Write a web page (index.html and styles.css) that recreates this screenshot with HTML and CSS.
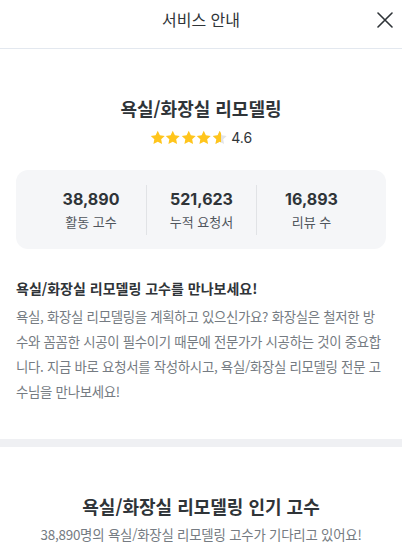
FILE: index.html
```html
<!DOCTYPE html>
<html lang="ko">
<head>
    <meta charset="UTF-8">
    <meta name="viewport" content="width=device-width, initial-scale=1.0">
    <title>서비스 안내</title>
    <link rel="stylesheet" href="styles.css">
</head>
<body>
    <header class="top-bar">
        <h1>서비스 안내</h1>
        <button class="close-btn" aria-label="닫기">
            <svg width="16" height="16" viewBox="0 0 16 16">
                <path d="M1 1 L15 15 M15 1 L1 15" stroke="#2f3438" stroke-width="1.6" stroke-linecap="round" fill="none"/>
            </svg>
        </button>
    </header>

    <section class="intro">
        <h2 class="service-title">욕실/화장실 리모델링</h2>
        <div class="rating">
            <div class="stars">
                <svg viewBox="0 0 24 24"><path class="star-on" d="M12 1.2l3.3 6.9 7.5 1-5.5 5.2 1.4 7.5L12 18.2l-6.7 3.6 1.4-7.5L1.2 9.1l7.5-1z"/></svg>
                <svg viewBox="0 0 24 24"><path class="star-on" d="M12 1.2l3.3 6.9 7.5 1-5.5 5.2 1.4 7.5L12 18.2l-6.7 3.6 1.4-7.5L1.2 9.1l7.5-1z"/></svg>
                <svg viewBox="0 0 24 24"><path class="star-on" d="M12 1.2l3.3 6.9 7.5 1-5.5 5.2 1.4 7.5L12 18.2l-6.7 3.6 1.4-7.5L1.2 9.1l7.5-1z"/></svg>
                <svg viewBox="0 0 24 24"><path class="star-on" d="M12 1.2l3.3 6.9 7.5 1-5.5 5.2 1.4 7.5L12 18.2l-6.7 3.6 1.4-7.5L1.2 9.1l7.5-1z"/></svg>
                <svg viewBox="0 0 24 24">
                    <defs>
                        <clipPath id="half"><rect x="0" y="0" width="14" height="24"/></clipPath>
                    </defs>
                    <path class="star-off" d="M12 1.2l3.3 6.9 7.5 1-5.5 5.2 1.4 7.5L12 18.2l-6.7 3.6 1.4-7.5L1.2 9.1l7.5-1z"/>
                    <path class="star-on" clip-path="url(#half)" d="M12 1.2l3.3 6.9 7.5 1-5.5 5.2 1.4 7.5L12 18.2l-6.7 3.6 1.4-7.5L1.2 9.1l7.5-1z"/>
                </svg>
            </div>
            <span class="score">4.6</span>
        </div>

        <div class="stats">
            <div class="stat">
                <strong>38,890</strong>
                <span>활동 고수</span>
            </div>
            <div class="stat">
                <strong>521,623</strong>
                <span>누적 요청서</span>
            </div>
            <div class="stat">
                <strong>16,893</strong>
                <span>리뷰 수</span>
            </div>
        </div>
    </section>

    <section class="about">
        <h3>욕실/화장실 리모델링 고수를 만나보세요!</h3>
        <p>욕실, 화장실 리모델링을 계획하고 있으신가요? 화장실은 철저한 방수와 꼼꼼한 시공이 필수이기 때문에 전문가가 시공하는 것이 중요합니다. 지금 바로 요청서를 작성하시고, 욕실/화장실 리모델링 전문 고수님을 만나보세요!</p>
    </section>

    <div class="divider"></div>

    <section class="popular">
        <h2>욕실/화장실 리모델링 인기 고수</h2>
        <p>38,890명의 욕실/화장실 리모델링 고수가 기다리고 있어요!</p>
    </section>
</body>
</html>
```

FILE: styles.css
```css
:root {
    --text-dark: #2f3438;
    --text-gray: #757b82;
    --line: #e3e8ef;
    --card-bg: #f5f6f8;
    --band: #eff0f3;
    --star: #ffc51c;
    --star-off: #e3e4e6;
}

* {
    margin: 0;
    padding: 0;
    box-sizing: border-box;
}

body {
    font-family: "Noto Sans CJK KR", "Noto Sans", sans-serif;
    color: var(--text-dark);
    background: #fff;
    width: 402px;
    overflow: hidden;
}

.top-bar {
    position: relative;
    height: 49px;
    border-bottom: 1px solid var(--line);
    display: flex;
    align-items: center;
    justify-content: center;
}

.top-bar h1 {
    font-size: 16px;
    font-weight: 400;
    margin-top: -10px;
}

.close-btn {
    position: absolute;
    right: 9px;
    top: 12px;
    background: none;
    border: none;
    width: 16px;
    height: 16px;
    display: flex;
}

.intro {
    padding: 46px 14px 0;
    text-align: center;
}

.service-title {
    font-size: 18px;
    font-weight: 700;
    line-height: 26px;
}

.rating {
    margin-top: 7px;
    display: flex;
    justify-content: center;
    align-items: center;
    gap: 4px;
}

.stars {
    display: flex;
    gap: 0;
}

.stars svg {
    width: 15.5px;
    height: 15.5px;
}

.star-on {
    fill: var(--star);
}

.star-off {
    fill: var(--star-off);
}

.score {
    font-family: "Inter", sans-serif;
    font-size: 14px;
    line-height: 20px;
}

.stats {
    margin: 22px 2px 0;
    height: 79px;
    background: var(--card-bg);
    border-radius: 12px;
    display: grid;
    grid-template-columns: repeat(3, 110px);
    justify-content: center;
    align-items: center;
}

.stat {
    display: flex;
    flex-direction: column;
    align-items: center;
    padding: 2px 0;
    border-left: 1px solid #e1e3e6;
}

.stat:first-child {
    border-left: none;
}

.stat strong {
    font-family: "Inter", sans-serif;
    font-size: 16px;
    font-weight: 700;
    line-height: 24px;
}

.stat span {
    font-size: 13px;
    color: #4f555c;
    line-height: 22px;
}

.about {
    padding: 28px 16px 35px;
}

.about h3 {
    font-size: 14px;
    font-weight: 700;
    line-height: 22px;
}

.about p {
    margin-top: 5px;
    font-size: 13.4px;
    color: var(--text-gray);
    line-height: 25px;
    letter-spacing: -0.28px;
}

.divider {
    height: 8px;
    background: var(--band);
}

.popular {
    padding: 45px 16px 0;
    text-align: center;
}

.popular h2 {
    font-size: 18px;
    font-weight: 700;
    line-height: 28px;
}

.popular p {
    margin-top: 3px;
    font-size: 13.4px;
    color: var(--text-gray);
    line-height: 22px;
    letter-spacing: -0.2px;
}
```
